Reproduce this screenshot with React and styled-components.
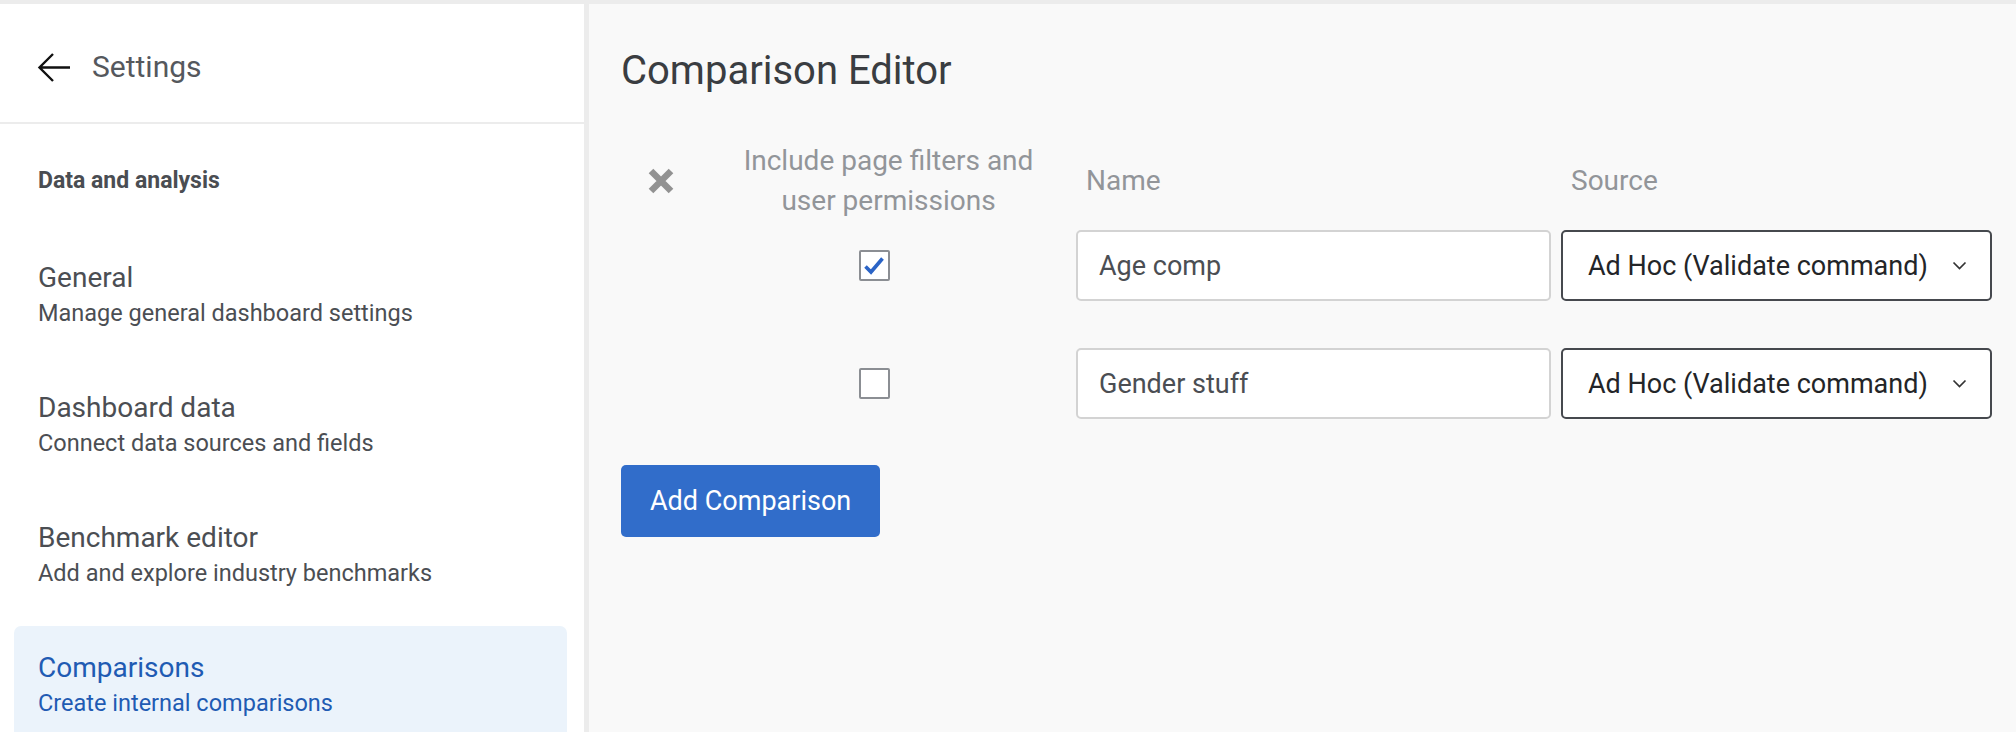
import React from 'react';
import styled, { createGlobalStyle } from 'styled-components';

const GlobalStyle = createGlobalStyle`
  html, body { margin: 0; padding: 0; height: 100%; }
  body {
    font-family: Roboto, "Noto Sans", Arial, sans-serif;
    background: #ececec;
    overflow: hidden;
  }
  #root { height: 100%; }
`;

const Page = styled.div`
  display: flex;
  gap: 5px;
  height: 100vh;
  padding-top: 4px;
  box-sizing: border-box;
  background: #ececec;
`;

const Sidebar = styled.aside`
  width: 584px;
  flex: none;
  background: #ffffff;
  display: flex;
  flex-direction: column;
  overflow: hidden;
  & > * { flex: none; }
`;

const SideHeader = styled.div`
  height: 120px;
  box-sizing: border-box;
  border-bottom: 2px solid #ececec;
  display: flex;
  align-items: center;
  gap: 21px;
  padding: 8px 0 0 37px;
`;

const BackButton = styled.button`
  border: none;
  background: none;
  padding: 0;
  display: flex;
  cursor: pointer;
`;

const SideTitle = styled.span`
  font-size: 30px;
  color: #55585d;
  line-height: 40px;
`;

const SectionLabel = styled.div`
  margin: 43px 0 0 38px;
  font-size: 23px;
  font-weight: 700;
  line-height: 28px;
  color: #4a4d52;
`;

const NavList = styled.nav`
  display: flex;
  flex-direction: column;
  gap: 12px;
  margin-top: 41px;
`;

const NavItem = styled.div`
  flex: none;
  margin: 0 17px 0 14px;
  padding: 24px 24px;
  border-radius: 7px;
  background: ${p => (p.$active ? '#ebf3fb' : 'transparent')};
  color: ${p => (p.$active ? '#1f5bb3' : '#4b4e53')};
  cursor: pointer;
`;

const NavTitle = styled.div`
  font-size: 28px;
  line-height: 36px;
`;

const NavSub = styled.div`
  font-size: 23.5px;
  line-height: 34px;
`;

const Main = styled.main`
  flex: 1;
  background: #f9f9f9;
  padding: 43px 24px 0 32px;
  box-sizing: border-box;
`;

const Title = styled.h1`
  margin: 0;
  font-size: 40px;
  font-weight: 400;
  line-height: 48px;
  color: #3a3d41;
`;

const Table = styled.div`
  margin-top: 46px;
  display: flex;
  flex-direction: column;
  gap: 47px;
`;

const Row = styled.div`
  display: grid;
  grid-template-columns: 80px 355px 475px 431px;
  column-gap: 10px;
  align-items: center;
  height: ${p => (p.$header ? '80px' : '71px')};
  margin-bottom: ${p => (p.$header ? '-38px' : '0')};
`;

const IconCell = styled.div`
  display: flex;
  justify-content: center;
`;

const HeadText = styled.div`
  font-size: 28px;
  line-height: 40px;
  color: #929599;
  text-align: ${p => (p.$center ? 'center' : 'left')};
  padding-left: ${p => (p.$center ? '0' : '10px')};
`;

const CheckCell = styled.div`
  display: flex;
  justify-content: center;
  padding-right: 29px;
`;

const CheckBox = styled.span`
  width: 31px;
  height: 31px;
  box-sizing: border-box;
  border: 2px solid #8b8e93;
  border-radius: 2px;
  background: #ffffff;
  display: flex;
  align-items: center;
  justify-content: center;
`;

const TextInput = styled.div`
  height: 71px;
  box-sizing: border-box;
  border: 2px solid #d3d3d3;
  border-radius: 5px;
  background: #ffffff;
  display: flex;
  align-items: center;
  padding-left: 21px;
  font-size: 27px;
  color: #4b4e53;
`;

const Select = styled.div`
  height: 71px;
  box-sizing: border-box;
  border: 2px solid #46494e;
  border-radius: 5px;
  background: #ffffff;
  display: flex;
  align-items: center;
  justify-content: space-between;
  padding: 0 23px 0 25px;
  font-size: 27px;
  color: #232528;
`;

const AddButton = styled.button`
  margin-top: 46px;
  height: 72px;
  padding: 0 29px;
  border: none;
  border-radius: 5px;
  background: #316dca;
  color: #ffffff;
  font-family: inherit;
  font-size: 27px;
  cursor: pointer;
`;

const ArrowIcon = () => (
  <svg width="34" height="31" viewBox="0 0 34 31" fill="none">
    <path d="M33 15.5H2.5M16 2L2.5 15.5L16 29" stroke="#111" strokeWidth="2.4" />
  </svg>
);

const RemoveIcon = () => (
  <svg width="28" height="28" viewBox="0 0 28 28">
    <path d="M4 4L24 24M24 4L4 24" stroke="#929292" strokeWidth="6.5" />
  </svg>
);

const CheckIcon = () => (
  <svg width="22" height="20" viewBox="0 0 22 20" fill="none">
    <path d="M2.5 10.5L8 16L19.5 2.5" stroke="#2b64c6" strokeWidth="3.6" />
  </svg>
);

const ChevronIcon = () => (
  <svg width="15" height="9" viewBox="0 0 15 9" fill="none">
    <path d="M1.5 1.5L7.5 7.5L13.5 1.5" stroke="#333" strokeWidth="1.7" />
  </svg>
);

const navItems = [
  { title: 'General', sub: 'Manage general dashboard settings' },
  { title: 'Dashboard data', sub: 'Connect data sources and fields' },
  { title: 'Benchmark editor', sub: 'Add and explore industry benchmarks' },
  { title: 'Comparisons', sub: 'Create internal comparisons', active: true },
];

const rows = [
  { name: 'Age comp', checked: true },
  { name: 'Gender stuff', checked: false },
];

export default function App() {
  return (
    <>
      <GlobalStyle />
      <Page>
        <Sidebar>
          <SideHeader>
            <BackButton aria-label="Back"><ArrowIcon /></BackButton>
            <SideTitle>Settings</SideTitle>
          </SideHeader>
          <SectionLabel>Data and analysis</SectionLabel>
          <NavList>
            {navItems.map(item => (
              <NavItem key={item.title} $active={item.active}>
                <NavTitle>{item.title}</NavTitle>
                <NavSub>{item.sub}</NavSub>
              </NavItem>
            ))}
          </NavList>
        </Sidebar>
        <Main>
          <Title>Comparison Editor</Title>
          <Table>
            <Row $header>
              <IconCell><RemoveIcon /></IconCell>
              <HeadText $center>Include page filters and<br />user permissions</HeadText>
              <HeadText>Name</HeadText>
              <HeadText>Source</HeadText>
            </Row>
            {rows.map(r => (
              <Row key={r.name}>
                <div />
                <CheckCell>
                  <CheckBox>{r.checked && <CheckIcon />}</CheckBox>
                </CheckCell>
                <TextInput>{r.name}</TextInput>
                <Select>
                  <span>Ad Hoc (Validate command)</span>
                  <ChevronIcon />
                </Select>
              </Row>
            ))}
          </Table>
          <AddButton>Add Comparison</AddButton>
        </Main>
      </Page>
    </>
  );
}
